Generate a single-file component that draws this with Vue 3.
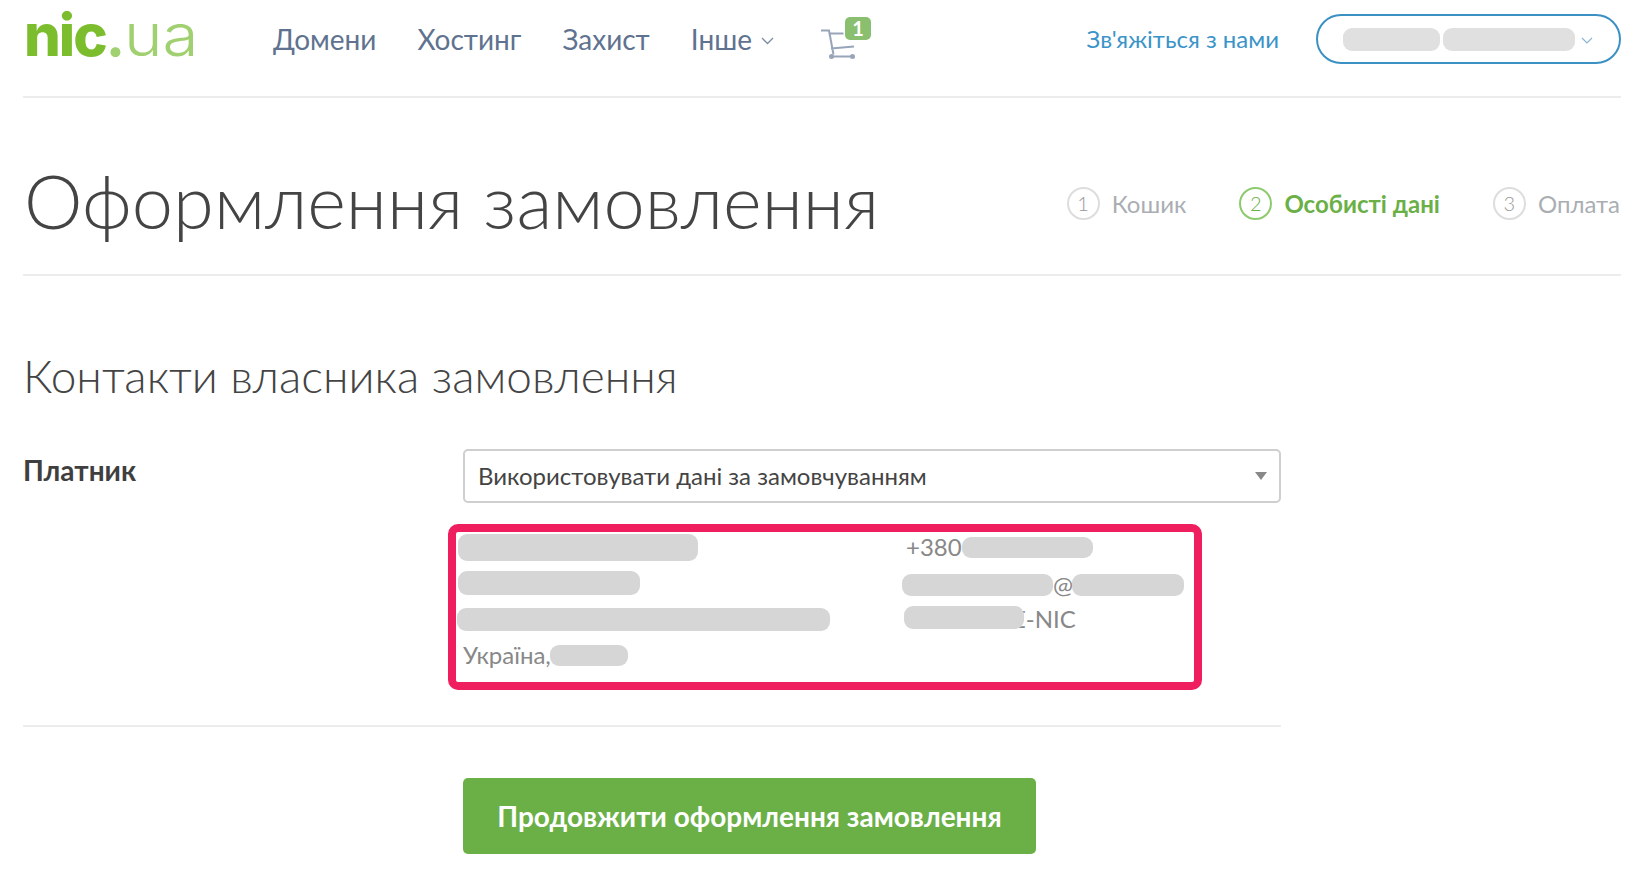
<script setup>
const nav = ['Домени', 'Хостинг', 'Захист']
const steps = [
  { n: 1, label: 'Кошик' },
  { n: 2, label: 'Особисті дані', active: true },
  { n: 3, label: 'Оплата' }
]
</script>

<template>
  <div class="page">
    <header class="top">
      <div class="logo"><b>nic</b><i>.</i><span>ua</span></div>
      <nav class="nav">
        <a v-for="item in nav" :key="item">{{ item }}</a>
        <a class="more">Інше
          <svg width="13" height="8" viewBox="0 0 13 8"><path d="M1 1l5.500 5.500L12 1" fill="none" stroke="#7d8ca5" stroke-width="1.3"/></svg>
        </a>
      </nav>
      <div class="cart">
        <svg width="36" height="31" viewBox="0 0 36 31">
          <path d="M0 1.500h8l4.500 24M7.500 4.500h15M10 19.500l23-2" fill="none" stroke="#98a5b8" stroke-width="2"/>
          <path d="M10 27.500h23" stroke="#98a5b8" stroke-width="2"/>
          <circle cx="10.500" cy="27.500" r="2.500" fill="#98a5b8"/>
          <circle cx="31.500" cy="27.500" r="2.500" fill="#98a5b8"/>
        </svg>
        <span class="badge">1</span>
      </div>
      <a class="contact">Зв'яжіться з нами</a>
      <div class="user">
        <span class="uname a"></span>
        <span class="uname b"></span>
        <svg width="12" height="7" viewBox="0 0 12 7"><path d="M1 1l5 5 5-5" fill="none" stroke="#8ab6d4" stroke-width="1.2"/></svg>
      </div>
    </header>

    <section class="title-row">
      <h1>Оформлення замовлення</h1>
      <ol class="steps">
        <li v-for="s in steps" :key="s.n" :class="{ on: s.active }">
          <span class="num">{{ s.n }}</span>{{ s.label }}
        </li>
      </ol>
    </section>

    <h2>Контакти власника замовлення</h2>

    <section class="form">
      <div class="label">Платник</div>
      <div class="field">
        <div class="select">
          <span>Використовувати дані за замовчуванням</span>
          <i class="caret"></i>
        </div>
        <div class="box">
          <div class="col left">
            <div class="line"><span class="p p1"></span></div>
            <div class="line"><span class="p p2"></span></div>
            <div class="line"><span class="p p3"></span></div>
            <div class="line tx"><span>Україна,</span><span class="p p4"></span></div>
          </div>
          <div class="col right">
            <div class="line tx r1"><span>+380</span><span class="p p5"></span></div>
            <div class="line tx r2"><span class="p p6"></span><span>@</span><span class="p p7"></span></div>
            <div class="line tx r3"><span class="p p8"></span><span>E-NIC</span></div>
          </div>
        </div>
      </div>
    </section>

    <section class="actions">
      <button class="go">Продовжити оформлення замовлення</button>
    </section>
  </div>
</template>

<style>
html, body { margin: 0; background: #fff; overflow: hidden; }
</style>

<style scoped>
.page {
  height: 872px;
  box-sizing: border-box;
  padding: 0 13px 0 23px;
  font-family: Lato, "Noto Sans", sans-serif;
  color: #444;
}
.top {
  height: 98px;
  box-sizing: border-box;
  border-bottom: 2px solid #ececec;
  display: flex;
  align-items: center;
}
.logo {
  width: 250px;
  height: 96px;
  padding-left: 1px;
  box-sizing: border-box;
  font-family: Inter, sans-serif;
  font-size: 58px;
  line-height: normal;
  white-space: nowrap;
}
.logo b { font-weight: 800; color: #7cbd2e; letter-spacing: -2px; }
.logo i { font-style: normal; font-weight: 700; color: #a0d070; }
.logo span {
  display: inline-block;
  font-weight: 300;
  color: #a0d070;
  margin-left: -1px;
  transform: scaleX(1.13);
  transform-origin: left center;
}
.nav {
  display: flex;
  gap: 41px;
  font-size: 28px;
  color: #5f7390;
  margin-top: -19px;
}
.more { display: flex; align-items: center; gap: 9px; }
.more svg { margin-top: 4px; }
.cart {
  position: relative;
  margin-left: 47px;
  width: 50px;
  height: 40px;
  margin-top: -22px;
}
.cart svg { position: absolute; left: 0; top: 12px; }
.badge {
  position: absolute;
  left: 24px;
  top: 0;
  width: 26px;
  height: 23px;
  border-radius: 5px;
  background: #8abf6f;
  color: #fff;
  font-size: 20px;
  font-weight: 700;
  line-height: 23px;
  text-align: center;
}
.contact {
  margin-left: auto;
  font-size: 24px;
  color: #3b94c8;
  margin-top: -19px;
}
.user {
  margin-left: 37px;
  width: 305px;
  height: 50px;
  box-sizing: border-box;
  border: 2px solid #3b90c4;
  border-radius: 25px;
  display: flex;
  align-items: center;
  padding-left: 25px;
  margin-top: -18px;
}
.uname { height: 23px; border-radius: 9px; background: #e0e0e0; }
.uname.a { width: 97px; }
.uname.b { width: 132px; margin-left: 3px; }
.user svg { margin-left: 6px; margin-top: 2px; }

.title-row {
  height: 178px;
  box-sizing: border-box;
  padding-top: 34px;
  border-bottom: 2px solid #ececec;
  display: flex;
  align-items: center;
  justify-content: space-between;
}
h1 {
  margin: -6px 0 0 1px;
  font-size: 74px;
  font-weight: 300;
  color: #444;
  white-space: nowrap;
}
.steps {
  list-style: none;
  margin: 0 1px 0 0;
  padding: 0;
  display: flex;
  gap: 53px;
  font-size: 24px;
  color: #aaaeb3;
}
.steps li { display: flex; align-items: center; gap: 12px; }
.num {
  width: 33px;
  height: 33px;
  box-sizing: border-box;
  border: 2px solid #ddd;
  border-radius: 50%;
  display: flex;
  align-items: center;
  justify-content: center;
  font-size: 20px;
  font-weight: 300;
  color: #999;
}
.steps .on { color: #6ab047; font-weight: 700; }
.steps .on .num { border-color: #8ccb6d; color: #6ab047; font-weight: 300; }

h2 {
  margin: 68px 0 0;
  height: 64px;
  line-height: 64px;
  font-size: 46px;
  font-weight: 300;
  color: #444;
}
.form {
  width: 1258px;
  margin-top: 41px;
  display: grid;
  grid-template-columns: 440px 1fr;
  padding-bottom: 35px;
  border-bottom: 2px solid #ececec;
}
.label { font-size: 28px; font-weight: 700; color: #3f3f3f; line-height: 42px; }
.select {
  height: 54px;
  box-sizing: border-box;
  border: 2px solid #cfcfcf;
  border-radius: 5px;
  padding: 0 13px 2px;
  display: flex;
  align-items: center;
  justify-content: space-between;
  font-size: 24px;
  color: #444;
}
.caret {
  width: 0;
  height: 0;
  border-left: 6px solid transparent;
  border-right: 6px solid transparent;
  border-top: 8px solid #888;
  margin: 2px -1px 0 0;
}
.box {
  margin: 21px 0 0 -15px;
  width: 754px;
  height: 166px;
  box-sizing: border-box;
  border: 8px solid #ef1f5f;
  border-radius: 10px;
  display: grid;
  grid-template-columns: 446px 1fr;
  font-size: 24px;
  color: #888;
}
.col { padding-top: 2px; display: flex; flex-direction: column; }
.left { gap: 10px; padding-left: 2px; }
.line { height: 26px; display: flex; align-items: center; white-space: nowrap; }
.tx { line-height: 26px; }
.left .tx { padding-left: 5px; }
.p { display: block; background: #d6d6d6; border-radius: 9px; flex: none; }
.p1 { width: 240px; height: 27px; }
.p2 { width: 182px; height: 24px; }
.p3 { width: 373px; height: 23px; margin-left: -1px; }
.p4 { width: 78px; height: 21px; margin-left: -1px; }
.r1 { padding-left: 4px; }
.r2 { margin-top: 12px; }
.r3 { margin-top: 8px; padding-left: 2px; }
.p5 { width: 131px; height: 21px; }
.p6 { width: 151px; height: 22px; }
.p7 { width: 112px; height: 22px; margin-left: -1px; }
.p8 { width: 120px; height: 23px; margin: -4px -12px 0 0; position: relative; z-index: 1; }

.actions { padding: 51px 0 0 440px; }
.go {
  width: 573px;
  height: 76px;
  border: 0;
  border-radius: 5px;
  background: #6ab047;
  color: #fff;
  font-family: Lato, "Noto Sans", sans-serif;
  font-size: 28px;
  font-weight: 700;
}
</style>
